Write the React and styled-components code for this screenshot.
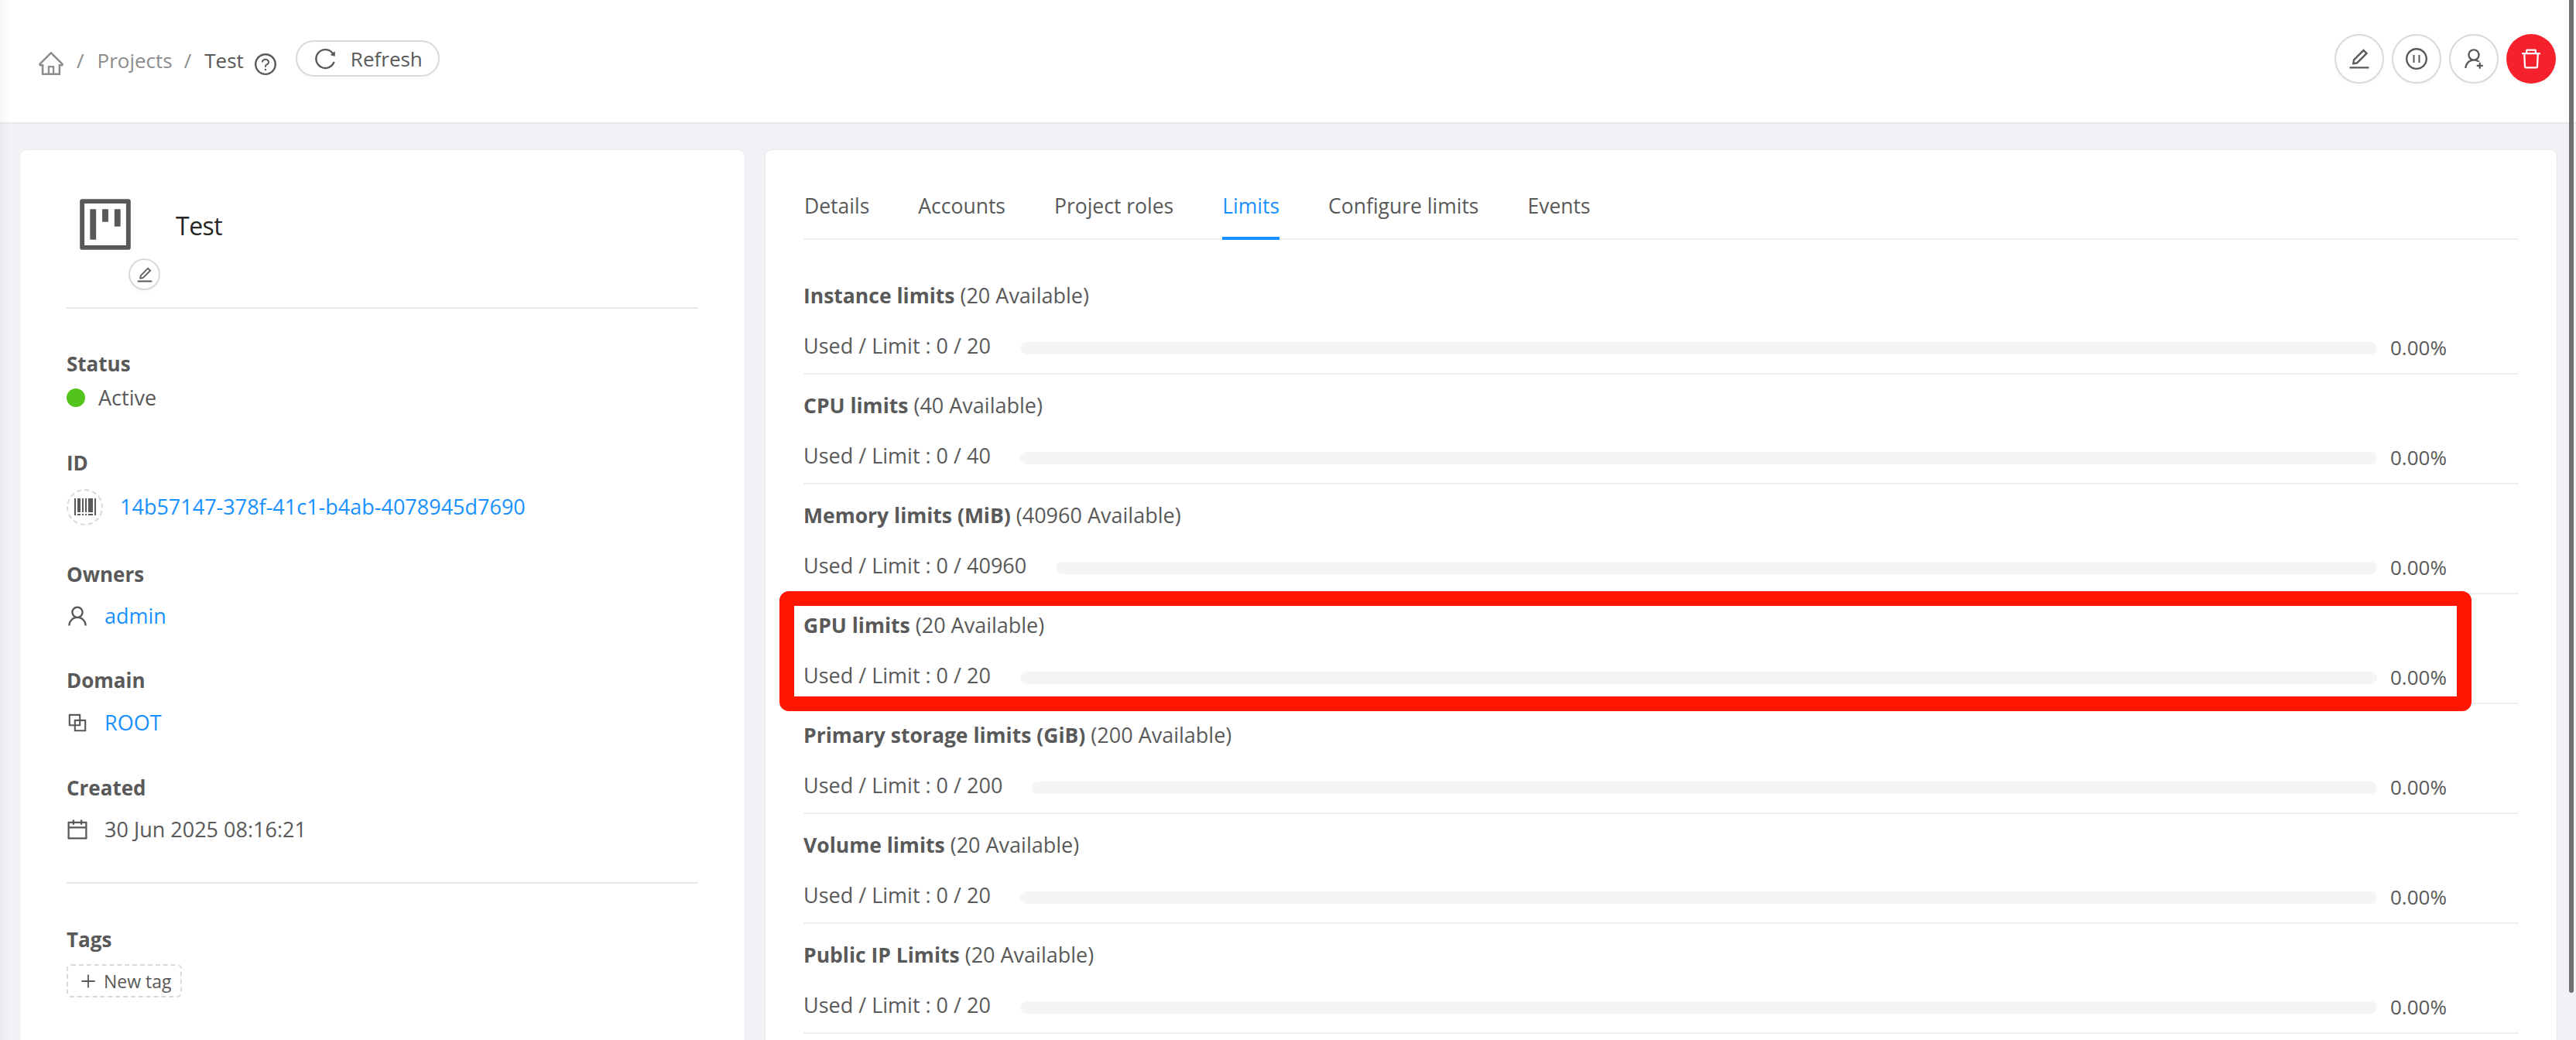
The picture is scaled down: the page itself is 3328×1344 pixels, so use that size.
import React from 'react';
import styled, { createGlobalStyle } from 'styled-components';
import {
  AiOutlineHome, AiOutlineQuestionCircle, AiOutlineReload, AiOutlineEdit, AiOutlinePauseCircle,
  AiOutlineUserAdd, AiOutlineDelete, AiOutlineProject, AiOutlineBarcode, AiOutlineUser,
  AiOutlineBlock, AiOutlineCalendar, AiOutlinePlus,
} from 'react-icons/ai';

const Global = createGlobalStyle`
  html, body { margin: 0; padding: 0; overflow: hidden; background: #f0f2f5; }
  * { box-sizing: border-box; }
  body { font-family: "Open Sans", "Noto Sans", sans-serif; font-size: 27px; color: #595959; }
`;

const Page = styled.div`
  position: relative;
  width: 3328px;
  height: 1344px;
  overflow: hidden;
  background: #f0f2f5;
  &::before {
    content: '';
    position: absolute;
    z-index: 3;
    left: 0; top: 0; bottom: 0;
    width: 14px;
    background: linear-gradient(to right, rgba(0,0,0,.035), rgba(0,0,0,0));
  }
`;

const Thumb = styled.div`
  position: absolute;
  z-index: 4;
  left: 3319px;
  top: 0;
  width: 6px;
  height: 1283px;
  background: #6f6f6f;
  border-radius: 0 0 3px 3px;
`;

const Header = styled.header`
  height: 160px;
  background: #fff;
  border-bottom: 2px solid #e8e8e8;
  display: flex;
  justify-content: space-between;
  padding: 44px 26px 0 50px;
`;

const Crumbs = styled.nav`
  display: flex;
  align-items: flex-start;
  height: 64px;
  padding-top: 14px;
  line-height: 40px;
  font-size: 26px;
`;

const HomeIcon = styled(AiOutlineHome)`
  font-size: 36px;
  color: #8c8c8c;
  margin: 6px 0 0 -2px;
`;

const Sep = styled.span`
  color: #8c8c8c;
  margin: 0 ${p => p.$r}px 0 ${p => p.$l}px;
`;

const Crumb = styled.span`
  color: ${p => (p.$current ? '#595959' : '#8c8c8c')};
`;

const HelpIcon = styled(AiOutlineQuestionCircle)`
  font-size: 32px;
  margin: 9px 0 0 12px;
`;

const RefreshButton = styled.button`
  display: flex;
  align-items: center;
  gap: 17px;
  height: 47px;
  width: 186px;
  margin: -6px 0 0 23px;
  padding: 0 0 0 20px;
  border: 2px solid #d9d9d9;
  border-radius: 24px;
  background: #fff;
  box-shadow: 0 4px 0 rgba(0,0,0,.015);
  font: inherit;
  color: #595959;
`;

const Actions = styled.div`
  display: flex;
  gap: 10px;
`;

const Circle = styled.button`
  width: ${p => p.$size}px;
  height: ${p => p.$size}px;
  border-radius: 50%;
  border: ${p => (p.$danger ? 'none' : '2px solid #d9d9d9')};
  background: ${p => (p.$danger ? '#f5222d' : '#fff')};
  color: ${p => (p.$danger ? '#fff' : '#595959')};
  box-shadow: 0 4px 0 rgba(0,0,0,.015);
  display: flex;
  align-items: center;
  justify-content: center;
  padding: 0;
  font-size: ${p => p.$icon}px;
`;

const Body = styled.main`
  display: flex;
  gap: 27px;
  padding: 34px 25px 0 26px;
`;

const Card = styled.section`
  background: #fff;
  border-radius: 8px;
  box-shadow: 0 0 0 1px #e8e8e8;
  height: 1300px;
`;

const LeftCard = styled(Card)`
  width: 936px;
  flex: none;
  padding: 60px 60px 0 60px;
`;

const RightCard = styled(Card)`
  flex: 1;
  padding: 0 49px;
`;

const Identity = styled.div`
  display: flex;
  gap: 20px;
  margin-bottom: 22px;
  padding-left: 14px;
`;

const AvatarColumn = styled.div`
  width: 107px;
  display: flex;
  flex-direction: column;
  align-items: flex-start;
  color: #595959;
  font-size: 84px;
  > svg { display: block; margin: -6px 0 0 -6px; }
`;

const EditSmall = styled(Circle)`
  margin: 2px 0 0 66px;
`;

const ProjectName = styled.h1`
  margin: 13px 0 0;
  font-size: 32px;
  letter-spacing: -0.5px;
  line-height: 50px;
  font-weight: 400;
  color: #262626;
`;

const Rule = styled.hr`
  border: 0;
  height: 2px;
  background: #e8e8e8;
  margin: ${p => p.$t}px 0 ${p => p.$b}px;
`;

const Label = styled.div`
  font-weight: 700;
  font-size: 26px;
  line-height: 40px;
  margin-top: ${p => p.$t || 0}px;
`;

const Value = styled.div`
  display: flex;
  align-items: center;
  height: 40px;
  line-height: 40px;
  margin-top: ${p => p.$t || 0}px;
  gap: ${p => p.$gap}px;
`;

const Dot = styled.span`
  width: 24px;
  height: 24px;
  border-radius: 50%;
  background: #52c41a;
`;

const DashedRing = styled.span`
  width: 47px;
  height: 47px;
  border-radius: 50%;
  border: 2px dashed #d9d9d9;
  display: flex;
  align-items: center;
  justify-content: center;
  font-size: 32px;
  flex: none;
`;

const FieldIcon = styled.span`
  width: 32px;
  height: 32px;
  margin-left: -2px;
  font-size: 32px;
  svg { display: block; }
`;

const Link = styled.a`
  color: #1890ff;
`;

const NewTag = styled.div`
  margin-top: 12px;
  width: 149px;
  height: 43px;
  border: 2px dashed #d9d9d9;
  border-radius: 6px;
  display: flex;
  align-items: center;
  gap: 8px;
  padding-left: 14px;
  font-size: 23px;
  svg { font-size: 24px; flex: none; }
`;

const Tabs = styled.nav`
  display: flex;
  gap: 63px;
  height: 116px;
  padding: 52px 0 0 1px;
  border-bottom: 2px solid #f0f0f0;
  line-height: 40px;
  font-size: 26.5px;
`;

const Tab = styled.span`
  position: relative;
  height: 62px;
  color: ${p => (p.$active ? '#1890ff' : '#595959')};
  ${p => p.$active && `
    &::after {
      content: '';
      position: absolute;
      left: 0; right: 0;
      bottom: -2px;
      height: 4px;
      background: #1890ff;
    }
  `}
`;

const Rows = styled.div`
  padding-top: 32px;
`;

const Row = styled.div`
  position: relative;
  height: 142px;
  padding-top: 20px;
  border-bottom: 2px solid #f0f0f0;
`;

const RowTitle = styled.div`
  line-height: 40px;
  b { font-weight: 700; font-size: 26.5px; }
`;

const Usage = styled.div`
  display: flex;
  align-items: center;
  margin-top: 23px;
  line-height: 40px;
`;

const UsedText = styled.span`
  flex: none;
  margin-right: 38px;
`;

const Track = styled.div`
  flex: 1;
  height: 16px;
  margin-top: 6px;
  background: #f5f5f5;
  border-radius: 8px;
`;

const Percent = styled.span`
  flex: none;
  width: 183px;
  padding-left: 17px;
  margin-top: 4px;
  font-size: 26px;
`;

const Highlight = styled.div`
  position: absolute;
  z-index: 2;
  left: -31px;
  top: -4px;
  width: 2186px;
  height: 155px;
  border: 19px solid #ff1500;
  border-radius: 12px;
  pointer-events: none;
`;

const limits = [
  ['Instance limits', 20, '20'],
  ['CPU limits', 40, '40'],
  ['Memory limits (MiB)', 40960, '40960'],
  ['GPU limits', 20, '20', true],
  ['Primary storage limits (GiB)', 200, '200'],
  ['Volume limits', 20, '20'],
  ['Public IP Limits', 20, '20'],
];

const tabs = ['Details', 'Accounts', 'Project roles', 'Limits', 'Configure limits', 'Events'];

export default function App() {
  return (
    <Page>
      <Global />
      <Thumb />
      <Header>
        <Crumbs>
          <HomeIcon />
          <Sep $l={15} $r={17}>/</Sep>
          <Crumb>Projects</Crumb>
          <Sep $l={15} $r={17}>/</Sep>
          <Crumb $current>Test</Crumb>
          <HelpIcon />
          <RefreshButton><AiOutlineReload size={32} />Refresh</RefreshButton>
        </Crumbs>
        <Actions>
          <Circle $size={64} $icon={32}><AiOutlineEdit /></Circle>
          <Circle $size={64} $icon={32}><AiOutlinePauseCircle /></Circle>
          <Circle $size={64} $icon={32}><AiOutlineUserAdd /></Circle>
          <Circle $size={64} $icon={32} $danger><AiOutlineDelete /></Circle>
        </Actions>
      </Header>
      <Body>
        <LeftCard>
          <Identity>
            <AvatarColumn>
              <AiOutlineProject />
              <EditSmall $size={41} $icon={24}><AiOutlineEdit /></EditSmall>
            </AvatarColumn>
            <ProjectName>Test</ProjectName>
          </Identity>
          <Rule $t={0} $b={51} />
          <Label>Status</Label>
          <Value $gap={17} $t={4}><Dot />Active</Value>
          <Label $t={44}>ID</Label>
          <Value $gap={22} $t={17}><DashedRing><AiOutlineBarcode /></DashedRing><Link>14b57147-378f-41c1-b4ab-4078945d7690</Link></Value>
          <Label $t={47}>Owners</Label>
          <Value $gap={19} $t={14}><FieldIcon><AiOutlineUser /></FieldIcon><Link>admin</Link></Value>
          <Label $t={43}>Domain</Label>
          <Value $gap={19} $t={15}><FieldIcon><AiOutlineBlock /></FieldIcon><Link>ROOT</Link></Value>
          <Label $t={44}>Created</Label>
          <Value $gap={19} $t={14}><FieldIcon><AiOutlineCalendar /></FieldIcon>30 Jun 2025 08:16:21</Value>
          <Rule $t={48} $b={52} />
          <Label>Tags</Label>
          <NewTag><AiOutlinePlus />New tag</NewTag>
        </LeftCard>
        <RightCard>
          <Tabs>
            {tabs.map(t => <Tab key={t} $active={t === 'Limits'}>{t}</Tab>)}
          </Tabs>
          <Rows>
            {limits.map(([name, limit, avail, marked]) => (
              <Row key={name}>
                {marked && <Highlight />}
                <RowTitle><b>{name}</b> ({avail} Available)</RowTitle>
                <Usage>
                  <UsedText>Used / Limit : 0 / {limit}</UsedText>
                  <Track />
                  <Percent>0.00%</Percent>
                </Usage>
              </Row>
            ))}
          </Rows>
        </RightCard>
      </Body>
    </Page>
  );
}
